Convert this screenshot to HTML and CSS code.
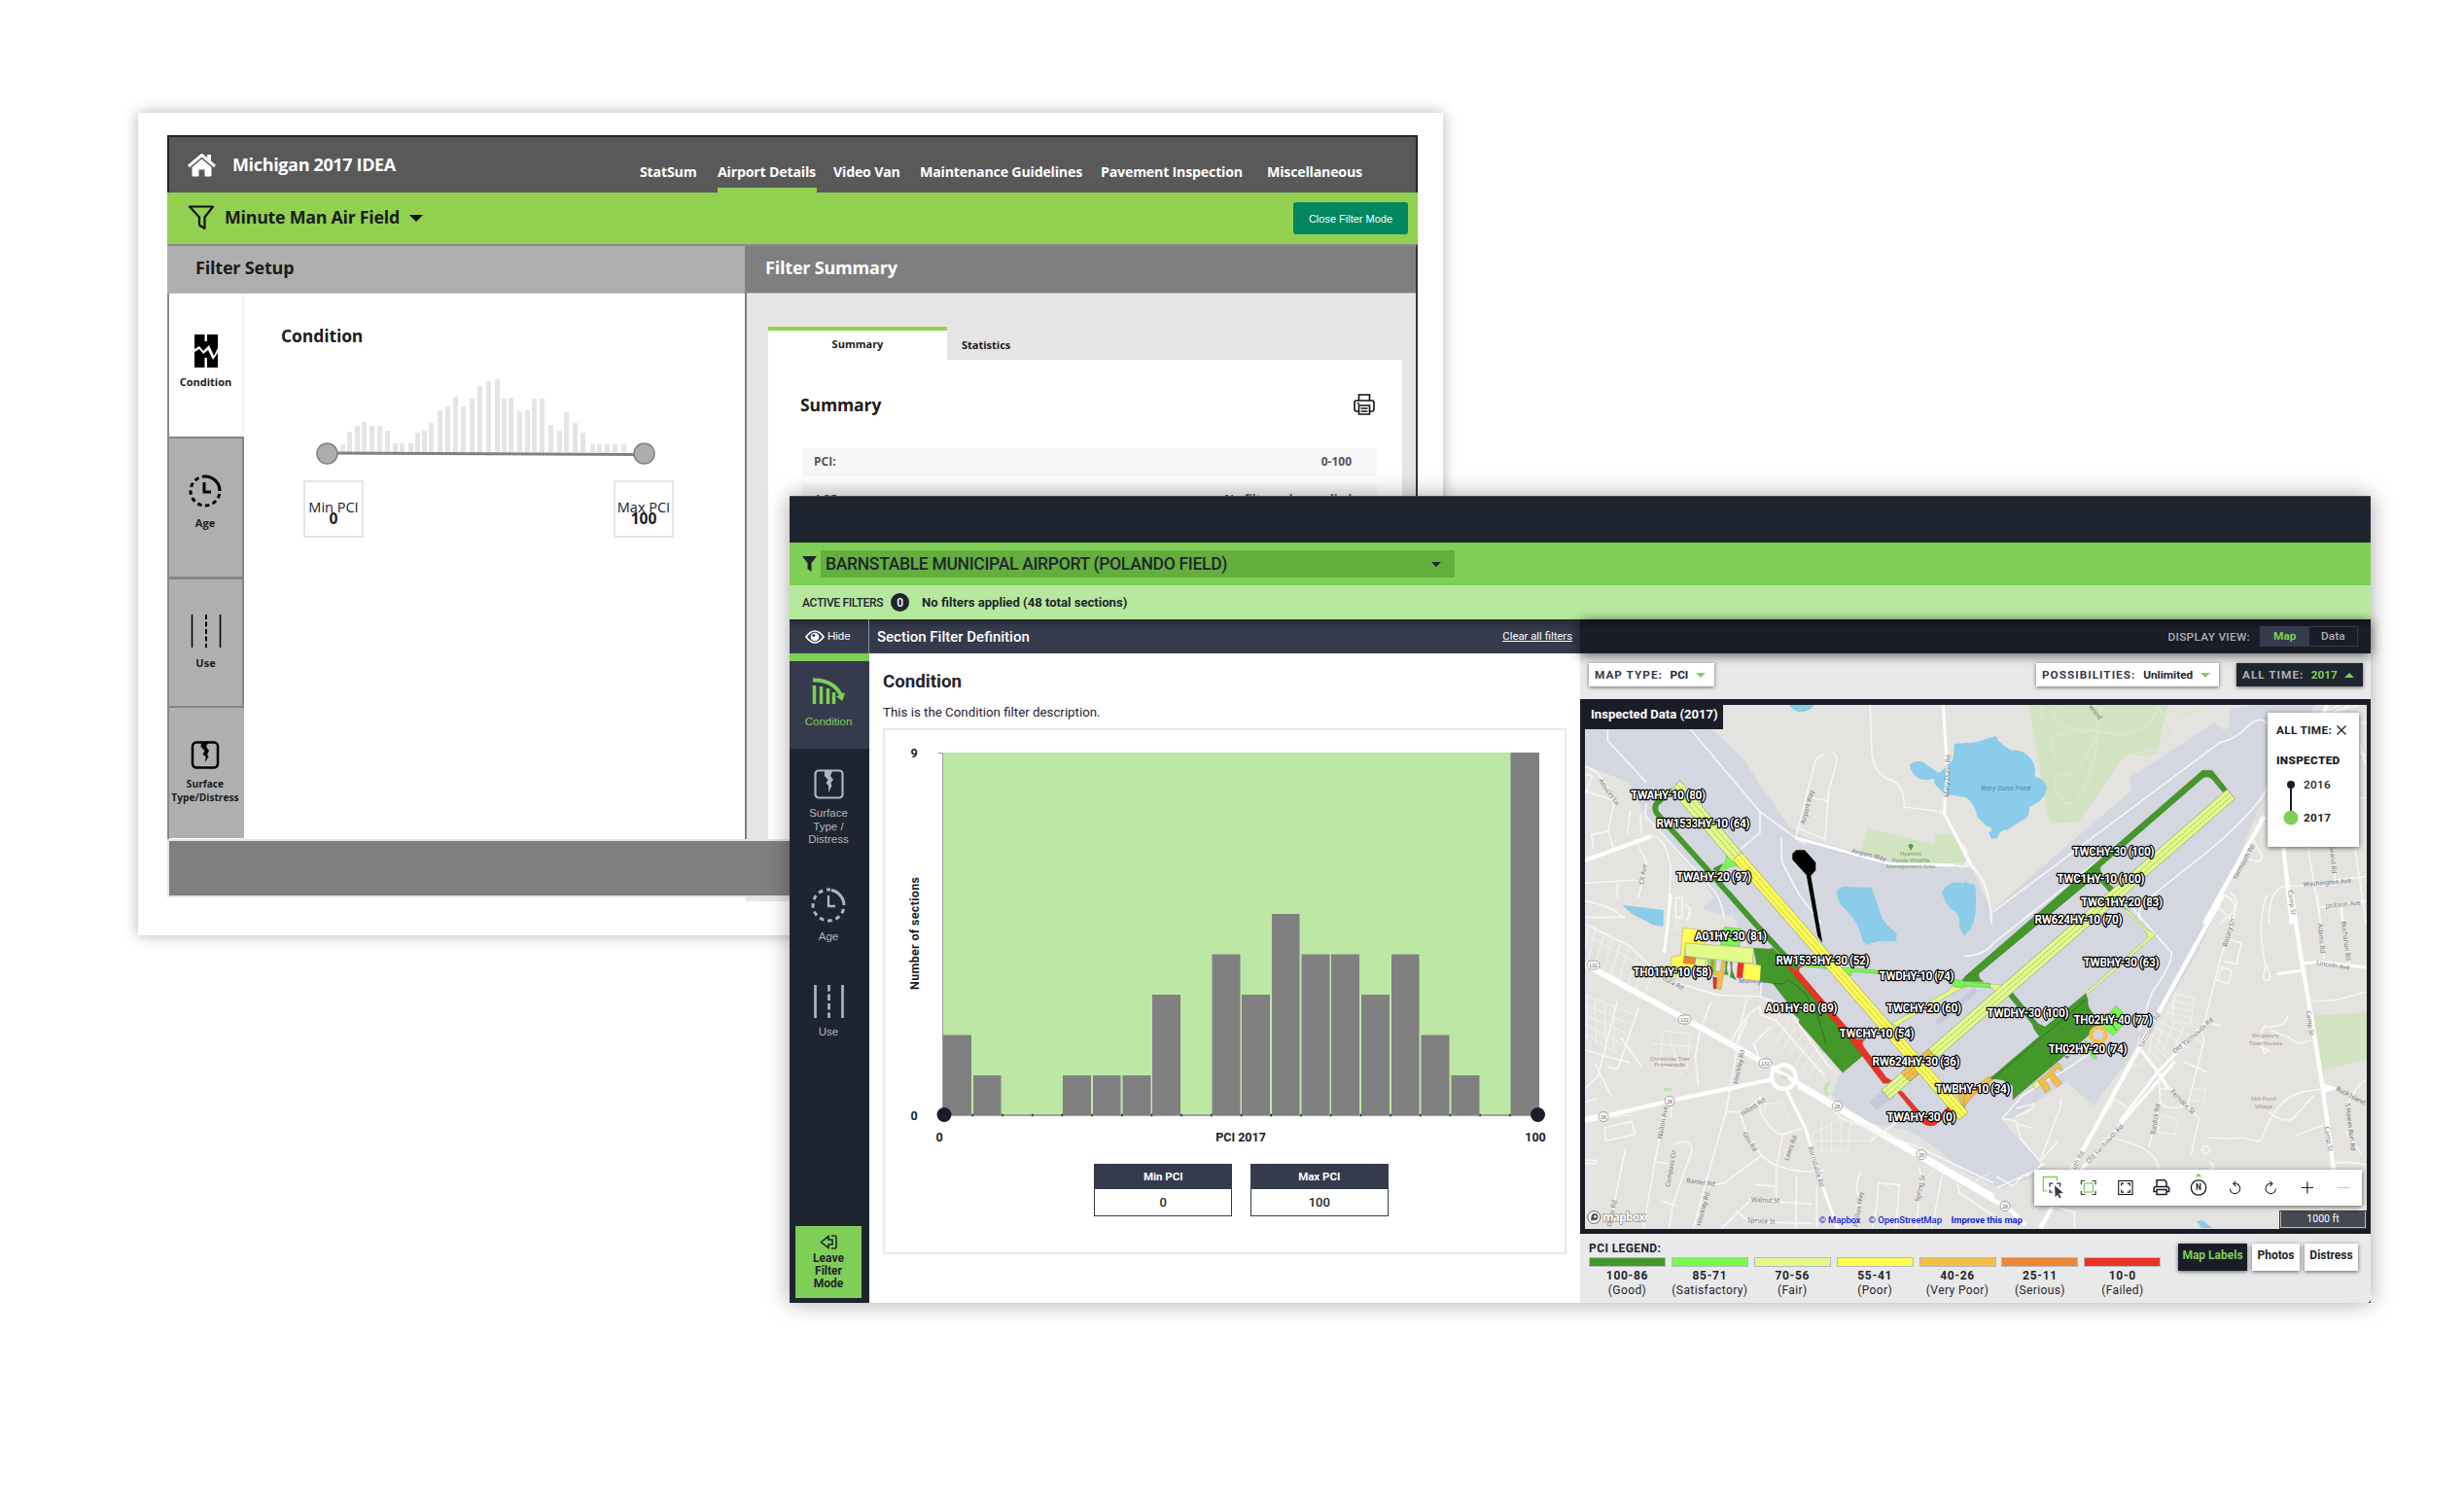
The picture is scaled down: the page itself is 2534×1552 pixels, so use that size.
FILE: index.html
```html
<!DOCTYPE html>
<html lang="en">
<head>
<meta charset="utf-8">
<title>Airport pavement filters</title>
<link rel="stylesheet" href="styles.css">
</head>
<body>
<main class="desktop">

<section class="wireframe">
  <div class="wf-frame">
    <header class="wf-header">
      <svg class="wf-home" viewBox="0 0 29 24"><path d="M1 13 14.500 1.500 28 13" fill="none" stroke="#fff" stroke-width="3"/><path d="M20 1h4v8l-4-4zM4.500 14 14.500 5.500 24.500 14v8.500q0 1-1 1H17.500v-7h-6v7H5.500q-1 0-1-1z" fill="#fff"/></svg>
      <h1 class="wf-title">Michigan 2017 IDEA</h1>
      <nav class="wf-nav"><span>StatSum</span><span class="current">Airport Details</span><span>Video Van</span><span>Maintenance Guidelines</span><span>Pavement Inspection</span><span>Miscellaneous</span></nav>
    </header>
    <div class="wf-airport">
      <svg class="wf-funnel" viewBox="0 0 28 26"><path d="M2 1.500H26L17.500 12.500V24L12 20.500V12.500Z" fill="none" stroke="#111" stroke-width="2.200" stroke-linejoin="round"/></svg>
      <strong>Minute Man Air Field</strong>
      <i class="caret wf-caret"></i>
      <button class="wf-close">Close Filter Mode</button>
    </div>
    <div class="wf-body">
      <section class="wf-setup">
        <h2 class="wf-bar">Filter Setup</h2>
        <div class="wf-setup-row">
          <aside class="wf-side">
            <div class="wf-tab t1"><svg width="24" height="34" viewBox="0 0 24 34"><path d="M0 0H10.500V7H13V0H24V14L20 22 15 11 9 17 5 12 0 15Z"/><path d="M0 18 5 15 9 20 14 16 19 26 24 19V34H13V24H10.500V34H0Z"/></svg><span>Condition</span></div>
            <div class="wf-tab t2"><svg width="34" height="34" viewBox="0 0 34 34"><path d="M17 2A15 15 0 0 1 32 17" fill="none" stroke="#000" stroke-width="3"/><path d="M32 17A15 15 0 1 1 17 2" fill="none" stroke="#000" stroke-width="3" stroke-dasharray="4.500 3.500" stroke-dashoffset="-3"/><path d="M16 8V18H23" fill="none" stroke="#000" stroke-width="3"/></svg><span>Age</span></div>
            <div class="wf-tab t3"><svg width="32" height="34" viewBox="0 0 32 34"><path d="M1.500 0V34M30.500 0V34" stroke="#000" stroke-width="1.500"/><path d="M16 0V34" stroke="#000" stroke-width="2" stroke-dasharray="5 2.500"/></svg><span>Use</span></div>
            <div class="wf-tab t4"><svg width="30" height="29" viewBox="0 0 30 29"><rect x="2" y="1.500" width="26" height="26" rx="4" fill="none" stroke="#000" stroke-width="2.500"/><path d="M11 2H18L16 6 19 10 17 14 18.500 16 15 22 15.500 16 12.500 14 14.500 10 10.500 6Z"/></svg><span>Surface<br>Type/Distress</span></div>
          </aside>
          <div class="wf-main">
            <h3>Condition</h3>
            <svg class="wf-hist" width="400" height="90" viewBox="0 0 400 90">
              <g fill="#e5e5e5"><path d="M35 67h5v8h-5zM42 54h5v21h-5zM50 48h5v27h-5zM57 44h5v31h-5zM65 48h5v27h-5zM73 48h5v27h-5zM81 53h5v22h-5zM89 66h5v9h-5zM96 66h5v9h-5zM105 66h5v9h-5zM112 55h5v23h-5zM119 53h5v22h-5zM126 45h5v30h-5zM135 32h5v43h-5zM143 28h5v47h-5zM151 18h5v57h-5zM159 28h5v47h-5zM168 20h5v55h-5zM176 7h5v68h-5zM185 2h5v77h-5zM194 0h5v75h-5zM201 20h5v55h-5zM208 19h5v56h-5zM217 33h5v42h-5zM225 32h5v43h-5zM232 20h5v55h-5zM240 20h5v55h-5zM249 47h5v28h-5zM258 53h5v22h-5zM265 34h5v41h-5zM274 45h5v30h-5zM282 55h5v20h-5zM292 67h5v8h-5zM299 67h5v8h-5zM307 67h5v8h-5zM315 67h5v8h-5zM324 67h5v8h-5z"/></g>
              <path d="M21.500 76 347.500 77.500" stroke="#808080" stroke-width="3"/>
              <circle cx="21.500" cy="76.500" r="10.500" fill="#adadad" stroke="#808080" stroke-width="1.500"/><circle cx="347.500" cy="76.500" r="10.500" fill="#adadad" stroke="#808080" stroke-width="1.500"/>
            </svg>
            <div class="wf-limits"><div>Min PCI<b>0</b></div><div>Max PCI<b>100</b></div></div>
          </div>
        </div>
      </section>
      <section class="wf-summary">
        <h2 class="wf-bar">Filter Summary</h2>
        <div class="wf-tabs"><span class="on">Summary</span><span>Statistics</span></div>
        <div class="wf-sheet">
          <div class="wf-sheet-head"><h3>Summary</h3>
            <svg width="22" height="22" viewBox="0 0 22 22" fill="none" stroke="#111" stroke-width="1.600"><path d="M5.500 7V1H16.500V7M5 18H3Q1 18 1 16V9Q1 7 3 7H19Q21 7 21 9V16Q21 18 19 18H17M5.500 12H16.500V21H5.500ZM7.500 15H14.500M7.500 18H14.500M4 10H6"/></svg></div>
          <div class="wf-row"><span>PCI:</span><span>0-100</span></div>
          <div class="wf-row"><span>AGE:</span><span>No filter rules applied</span></div>
        </div>
      </section>
    </div>
    <footer class="wf-footer"></footer>
    <div class="wf-tail"></div>
  </div>
</section>

<section class="app">
  <div class="app-top"></div>
  <div class="app-airport">
    <svg width="15" height="16" viewBox="0 0 15 16"><path d="M0 0H15L9.500 7V16L5.500 13V7Z" fill="#1f2530"/></svg>
    <div class="app-select"><span>BARNSTABLE MUNICIPAL AIRPORT (POLANDO FIELD)</span><i class="caret"></i></div>
  </div>
  <div class="app-active"><span>ACTIVE FILTERS</span><b class="count">0</b><strong>No filters applied (48 total sections)</strong></div>
  <div class="app-body">
    <aside class="side">
      <div class="hide"><svg width="20" height="14" viewBox="0 0 20 14"><path d="M1 7Q10-5 19 7Q10 19 1 7Z" fill="none" stroke="#fff" stroke-width="1.700"/><circle cx="10" cy="7" r="4.300" fill="#fff"/><circle cx="8.800" cy="5.500" r="1.500" fill="#353b4c"/></svg>Hide</div>
      <div class="item active"><svg width="34" height="28" viewBox="0 0 34 28" fill="none" stroke="#7fcf56"><path d="M1 2.500C17 2 26 9 31 20" stroke-width="4"/><path d="M34 15 31.500 24 25 19.500Z" fill="#7fcf56" stroke="none"/><path d="M2.500 8V27M9.500 9V27M16.500 11V27M22.500 15V27" stroke-width="3.500"/></svg><span>Condition</span></div>
      <div class="item surface"><svg width="31" height="31" viewBox="0 0 31 31"><rect x="1.500" y="1.500" width="28" height="28" rx="3.500" fill="none" stroke="#aeb4c2" stroke-width="2.200"/><path d="M11 2H19L17 7 20 11 17.500 14 18.500 17 15 24 15 17 12.500 14.500 14.500 11 11 7Z" fill="#aeb4c2"/></svg><span>Surface<br>Type /<br>Distress</span></div>
      <div class="item age"><svg width="36" height="36" viewBox="0 0 36 36" fill="none" stroke="#aeb4c2" stroke-width="3"><path d="M21 2.500A16 16 0 0 1 34 18"/><path d="M34 19A16 16 0 1 1 20 2" stroke-dasharray="4.600 4" stroke-dashoffset="-3"/><path d="M18 8V19H25" stroke-width="2.300"/></svg><span>Age</span></div>
      <div class="item use"><svg width="31" height="34" viewBox="0 0 31 34" fill="none" stroke="#aeb4c2" stroke-width="2.700"><path d="M1.500 0V34M29.500 0V34"/><path d="M15.500 0V34" stroke-dasharray="6.500 3"/></svg><span>Use</span></div>
      <div class="leave"><svg width="18" height="15" viewBox="0 0 18 15" fill="none" stroke="#1f2530" stroke-width="1.600"><path d="M12 1H15.500Q17 1 17 2.500V12.500Q17 14 15.500 14H12M9 5V1.500L1.500 7.500 9 13.500V10H13V5Z"/></svg>Leave<br>Filter<br>Mode</div>
    </aside>
    <section class="def">
      <header><h2>Section Filter Definition</h2><a>Clear all filters</a></header>
      <div class="def-body">
        <h3>Condition</h3>
        <p>This is the Condition filter description.</p>
        <div class="card">
          <svg class="chart" width="698" height="432" viewBox="910 751 698 432">
            <path d="M969.500 774H1583V1147H969.500Z" fill="#bce7a5"/>
            <path d="M965 774.500H969.500V1147" fill="none" stroke="#999" stroke-width="1"/>
            <path d="M969.500 1147H1583" stroke="#888" stroke-width="1.500"/>
            <path d="M969.500 1147H1583" stroke="#1a1e29" stroke-width="2.500" stroke-dasharray="1.500 29.200" stroke-dashoffset="-30"/>
            <g fill="#808080"><path d="M970 1064.500h29V1147h-29zM1001 1106h28.500V1147h-28.500zM1093 1106h29V1147h-29zM1124 1106h28.500V1147h-28.500zM1154.500 1106h29V1147h-29zM1185 1023h29V1147h-29zM1246.500 981.500h29V1147h-29zM1277 1023h29V1147h-29zM1308 940h28.500V1147h-28.500zM1338.500 981.500h29V1147h-29zM1369 981.500h29V1147h-29zM1400 1023h29V1147h-29zM1431 981.500h28.500V1147h-28.500zM1461.500 1064.500h29V1147h-29zM1492.500 1106h29V1147h-29zM1553.500 774h29.500V1147h-29.500z"/></g>
            <g fill="#191d28"><circle cx="971" cy="1146.500" r="7.500"/><circle cx="1581.500" cy="1146.500" r="7.500"/></g>
            <g class="chart-text"><text x="940" y="779">9</text><text x="940" y="1151.500">0</text><text x="966" y="1174">0</text><text x="1276" y="1174">PCI 2017</text><text x="1579" y="1174">100</text><text transform="translate(945 960) rotate(-90)" textLength="116">Number of sections</text></g>
          </svg>
          <div class="limits"><div><b>Min PCI</b><span>0</span></div><div><b>Max PCI</b><span>100</span></div></div>
        </div>
      </div>
    </section>
    <section class="view">
      <header><span>DISPLAY VIEW:</span><div class="seg"><b>Map</b><span>Data</span></div></header>
      <div class="filters">
        <div class="drop"><span>MAP TYPE:</span><b>PCI</b><i class="caret"></i></div>
        <div class="drop poss"><span>POSSIBILITIES:</span><b>Unlimited</b><i class="caret"></i></div>
        <div class="drop dark"><span>ALL TIME:</span><b>2017</b><i class="caret up"></i></div>
      </div>
      <div class="map">
        <svg class="map-art" viewBox="1630 725 804 539" preserveAspectRatio="none">
          <rect x="1630" y="725" width="804" height="539" fill="#e4e3df"/>
          <path fill="#d5d7e0" d="M1630 745H1755L1793 780 1810 807 1840 850 1857 862 1897 873 2027 892 2048 937 2110 883 2192 813 2190 800 2277 743 2287 751 2293 747V730L2317 725H2380L2330 810 2297 897 2260 980 2220 1047 2153 1138 2125 1112 2070 1150H2057L2102 1200 2100 1208 2057 1222 2020 1205 1990 1180 1963 1163 1923 1155 1883 1127 1893 1103 1850 1050 1810 1023 1800 980 1783 943 1750 935 1763 923 1750 905 1693 840 1675 805 1630 787Z"/>
          <path fill="#c6c9dc" d="M1922 1133 1940 1118 1949 1127 1930 1142ZM1990 1050 2030 1015 2034 1020 1994 1055ZM1870 1079 1884 1070 1890 1075 1876 1083Z"/>
          <g transform="translate(2020 610) scale(.33333)">
            <path fill="#d1e3c1" d="M198 340H630L592 500H495L352 707 263 710Z"/>
            <g fill="none" stroke="#dbe5d2" stroke-width="6"><path d="M240 345Q245 400 225 410M300 345Q240 380 330 420L414 425 480 440Q570 430 600 350M414 425Q360 560 310 560T290 620 360 620 414 425M380 430Q280 420 270 460T300 510M400 345 416 425M500 500Q640 480 635 430L600 345M640 360Q700 390 740 345"/></g>
            <path fill="#8accea" d="M40 460 95 443Q115 470 145 485 180 480 205 510 225 535 216 565 250 575 255 600 250 640 200 660 205 690 180 700L135 730Q108 730 103 755L85 758 75 740Q100 725 70 720L40 690Q35 650 5 630L-60 620-90 590Q-100 560-70 550L-35 515-30 465Z"/>
          </g>
          <g transform="translate(1610 610) scale(.33333)">
            <path fill="#8accea" d="M1210 560Q1225 530 1270 500V460L1330 440V760L1310 745 1315 725 1295 710 1280 650 1240 630 1210 615 1230 605ZM690 345H767Q755 367 722 367 700 362 690 345ZM1062 530Q1075 515 1100 520L1148 553 1147 570 1115 577Q1070 575 1062 530ZM838 920Q850 900 880 907L943 908Q960 950 970 985T1022 1050L1020 1075 960 1075 927 1086 915 1070Q905 1010 855 970 835 945 838 920ZM1162 920Q1190 885 1220 893L1263 900 1267 945Q1245 985 1252 1035L1230 1058 1215 1030Q1220 985 1190 975 1165 950 1162 920ZM175 962 302 978V1028L270 1024Q235 1005 205 990Z"/>
            <path fill="#d1e3c1" d="M932 725 1140 775V743H1195L1237 830 1150 840 1000 822 912 795Z"/>
            <path fill="#579e4c" d="M1065 773a9 8 0 0 1 3 15v5h-5v-5a9 8 0 0 1 2-15z"/>
          </g>
          <path fill="#8accea" d="M2020 906 2031 912Q2034 935 2029 950L2020 960ZM2259 1256 2265 1255 2275 1263H2264Z"/>
          <g fill="#d1e3c1"><path d="M2378 1045 2434 1041V1090L2387 1101Z"/><path fill="#bfe0ae" d="M1711 1119h8v3h-8z"/></g>

          <g class="roads">
            <g transform="translate(1610 610) scale(.33333)">
              <path class="w4" d="M385 420 600 675 710 755 742 775M130 420V455L250 585M60 535Q120 550 148 650L132 735 148 790M60 825 265 750Q310 750 325 850L315 1020M940 345 945 500Q955 560 1000 575T1045 660L1145 672 1165 680M710 755 770 520Q780 500 798 500M800 765 812 610 835 530Q840 500 825 492M750 630 810 640M715 725 803 760M1165 345 1178 550 1168 680 1250 835Q1240 850 1200 840L1000 835 710 755M1250 835Q1310 900 1315 1020M60 560 82 565 60 620M85 790 80 745 130 735M148 640 60 610M200 670 190 745M230 680 235 745M215 760 250 830 225 940M220 885 60 895M160 885V940M250 650Q240 690 260 700L460 920Q480 950 490 1000M600 675V740L540 790M665 755 668 830 720 930 790 1020M340 940H360V1000H340ZM370 960 385 975 375 1010M60 950Q130 960 180 1000L60 1000"/>
              <path class="w8" d="M1165 345 1178 550 1168 680 1250 835M710 755 1000 835 1200 840"/>
              <path class="w12" d="M60 825 265 750"/>
            </g>
            <g transform="translate(1610 920) scale(.33333)">
              <path class="w12" d="M85 225 367 385 616 520 680 560 838 653 1098 803 1320 930M60 695 118 685 320 637 640 570"/>
              <path class="w12 wider" d="M60 215 616 520M720 590 1320 940M60 695 118 685"/>
              <path class="w8" d="M680 600 740 720 790 890 840 1030M325 0 305 180"/>
              <path class="w4" d="M60 90 200 160 300 260 470 310 600 315 680 345 740 430 820 540M600 315 605 270M600 370V345Q530 380 525 500L495 670 430 900 395 1030M495 670 540 670Q545 730 605 805L530 860 490 890 440 900M605 805Q650 850 745 855L800 850M540 680 605 625M600 620V670Q640 740 670 740L730 720M670 740 650 850V940M60 820H95V830H60M185 785 140 1000M310 640 275 830 240 1030M335 770Q390 750 390 790L330 960 320 1030M275 825 315 830M295 945 340 960M565 940 610 945 760 955M525 975 570 1010 760 1015M480 1030 570 945M585 895 645 900M713 870 710 1030M775 900V1030M910 855Q890 900 905 930L890 1030M945 1030Q965 960 965 890L1030 895 1020 1030M820 620Q800 640 850 690L1090 780 1320 890M1090 840 1100 880 1080 1030M1165 850 1130 1030M1210 890 1215 920 1320 990M940 760 1040 690M120 720 205 700 215 740 125 760ZM325 640 325 690M235 530 170 440M160 330 100 560 60 600M90 520 140 620M60 640 100 630M60 480 200 520M450 330 415 420 400 500 410 590M560 320 540 400 500 470M225 350 160 540 130 530M600 370 650 390 720 470 800 560M630 410 580 460 600 510M560 390 520 480 590 500"/>
              <path class="w3" d="M60 120 250 230M70 95 60 170M95 100 70 200M120 120 90 220M145 135 115 240M170 145 140 250M195 160 165 265M220 190 190 280M240 215 215 295M265 250 245 310M60 310 210 370M60 340 200 400M60 370 190 430M60 400 170 460M60 430 160 490M65 315V450M90 325 95 460M120 335 125 470M150 350 150 480M660 370 620 440M690 390 650 460M710 410 670 480M730 430 690 500M750 460 710 520M770 480 730 540M790 500 750 560M300 420 385 430 375 540 290 530ZM320 440 360 560M265 460 395 470M340 40H385V75H350V105H340ZM760 740 850 690 880 700 870 790 770 790ZM790 700V790M820 700V790M850 690V790M765 760H940M890 700 950 720 945 765M130 690 200 680M610 620 620 690M610 650 670 640 690 690M980 890 1025 920M1060 860 1120 870 1150 830M1230 900 1310 860"/>
              <circle cx="673" cy="563" r="37" class="w12" fill="none"/>
              <path class="verge" d="M815 578Q790 600 810 620M662 560 684 568"/>
            </g>
            <g transform="translate(2020 610) scale(.33333)">
              <path class="w4" d="M87 985 790 460Q830 455 870 415T935 403M0 780Q20 820 0 845M20 845Q80 880 83 1010M930 610Q890 680 760 790L560 950Q530 980 545 1010M1215 450 1240 530M1215 490 1240 500M1160 345 1110 370M1190 345 1130 370M1215 345 1140 370M1215 635 1240 630M1060 780 1100 1020M1140 785 1145 900 1000 905Q940 900 940 1020M1205 785 1240 1020M1145 885 1240 875M1095 970 1230 950M1165 960 1170 1020M890 760 920 810Q915 830 900 828L860 815M820 925Q850 940 835 980L790 1020M785 970 825 1010M1215 400H1240"/>
              <path class="w12" d="M1120 345 1080 440M925 690 740 1020M985 785 1010 1020"/>
              <path class="rail" d="M1080 345 720 1020M930 650 900 700"/>
            </g>
            <g transform="translate(2020 920) scale(.33333)">
              <path class="w12" d="M800 0 360 800 235 1030M0 885 150 980 190 1020M1010 0 1040 200 1075 400 1105 590 1140 850"/>
              <path class="w8" d="M650 515 360 850M480 700 600 545 740 400M1110 590 1145 600M545 480 600 550 630 600M965 245 1040 235M1040 212 1100 208 1240 225"/>
              <path class="w4" d="M0 190Q60 190 90 150L420-110M500 20 640 180Q640 220 580 300L540 420M400 480 330 530 180 620 118 690 160 700 175 755 240 830Q230 850 100 905M160 660 215 645 215 660 160 685M165 710 210 720M300 630 295 660 235 820M290 760 255 800 240 820M740 400 790 200 830 80Q850 20 800 0M690 650 740 450 730 420M600 600 640 600 725 690 700 805M600 545 605 640 570 780M605 640Q620 670 690 650M745 395 795 405M675 515 750 548M795 225 825 235 815 275 780 265ZM820 140 855 150 840 215 800 205M935 0Q900 80 930 220Q915 270 935 265T930 220M1075 330 1150 325 1240 300M1140 830Q1190 820 1240 835M1105 600 1040 610Q960 630 920 750 920 770 860 750 820 755 750 750M940 670Q970 700 1010 695L1080 620M1020 745 1110 710M1090 0 1110 200M1160 40 1190 225M1090 40 1240 20M1180 655Q1200 600 1240 570M1175 730 1225 800M450 750Q600 780 600 850M760 825 770 845 755 850 740 880 700 910M745 800a12 12 0 1 1 .1 0M250 830 190 870M100 870 150 900 180 870M220 975 310 880M450 660 460 630 500 655M270 960 340 980V1030M1105 960V1030M1240 960 1180 1000M1000 375 985 400 945 410 925 405 915 430 925 490 940 480 910 470M945 420 1000 440 1030 460 1070 450"/>
              <path class="w3" d="M650 305 710 320 700 400 640 390ZM640 325 700 340M635 345 700 360M630 365 700 380M660 305 620 380 580 440 570 480 610 520M600 390 740 460M590 410 700 480M580 430 650 510M570 450 630 510M620 385 590 480M650 390 610 490M680 400 640 500M540 440 520 520 540 530 580 470M620 680 660 695 650 740 600 735 600 690ZM710 600 745 600 740 640 700 635"/>
            </g>
          </g>
          <path fill="#fff" d="M2385 1110 2388 1113 2402 1120 2390 1124ZM1819 1107h5l-3 5z"/>

          <g class="places">
            <text transform="translate(1644 803) rotate(55)">Attucks Ln</text><text transform="translate(1690 910) rotate(-80)">Cit Ave</text><text transform="translate(1856 848) rotate(-75)">Airport Way</text><text transform="translate(1904 877) rotate(14)">Airport Way</text><text transform="translate(2004 820) rotate(-88)">Mary Dunn Rd</text>
            <text transform="translate(2148 727) rotate(52)">wood</text><text transform="translate(2300 905) rotate(-62)">Yarmouth Rd</text><text transform="translate(2369 912) rotate(-5)">Washington Ave</text><text transform="translate(2353 916) rotate(82)">Camp St</text><text transform="translate(2396 870) rotate(85)">Grand Rd</text><text transform="translate(2392 934) rotate(-6)">Jackson Ave</text><text transform="translate(2384 950) rotate(85)">Adams Rd</text><text transform="translate(2408 948) rotate(83)">Buchanan Rd</text><text transform="translate(2382 992) rotate(9)">Lincoln Ave</text><text transform="translate(2372 1040) rotate(82)">Camp St</text><text transform="translate(2391 1159) rotate(82)">Camp St</text><text transform="translate(2402 1121) rotate(28)" textLength="33">Buck Island</text><text transform="translate(2412 1135) rotate(83)">S Hawes Run Rd</text>
            <text transform="translate(2290 974) rotate(-74)">Rosary Ln</text><text transform="translate(2203 1078) rotate(-62)">Yarmouth Rd</text><text transform="translate(2237 1084) rotate(-41)">Old Yarmouth Rd</text><text transform="translate(2148 1197) rotate(-47)">Old Yarmouth Rd</text><text transform="translate(2134 1203) rotate(-62)">uth Rd</text><text transform="translate(2232 1123) rotate(46)">Ferndoc St</text><text transform="translate(2216 1167) rotate(-80)">Baldick Rd</text>
            <text transform="translate(1709 1007) rotate(28)">dura Rd</text><text transform="translate(1787 1115) rotate(-78)">Hinckley Rd</text><text transform="translate(1792 1148) rotate(-33)">Hiltett Rd</text><text transform="translate(1792 1166) rotate(58)">Otis Rd</text><text transform="translate(1709 1172) rotate(-80)">Walton Ave</text><text transform="translate(1717 1221) rotate(-80)">Compass Cir</text><text transform="translate(1734 1216) rotate(8)">Baxter Rd</text><text transform="translate(1839 1194) rotate(-70)">Lewis Rd</text><text transform="translate(1860 1180) rotate(74)">Barnstable Rd</text><text transform="translate(1801 1236) rotate(2)">Walnut St</text><text transform="translate(1797 1257) rotate(3)">Spruce St</text><text transform="translate(1749 1261) rotate(-75)">Hinckley Rd</text><text transform="translate(1657 1262) rotate(-78)">Oliver Rd</text><text transform="translate(1910 1262) rotate(-80)">Phillips Way</text><text transform="translate(1974 1236) rotate(-78)">Spring St</text>
            <g class="poi"><text x="1717" y="1091">Christmas Tree</text><text x="1717" y="1097">Promenade</text><text x="2330" y="1067">Kingsbury</text><text x="2330" y="1075">Townhouses</text><text x="2328" y="1132">Mill Pond</text><text x="2328" y="1140">Village</text></g>
            <g class="poi" fill="#64a05a"><text x="1965" y="880">Hyannis</text><text x="1965" y="887">Ponds Wildlife</text><text x="1965" y="893">Management Area</text></g>
            <text x="2037" y="812.500" fill="#4a7fc4" font-style="italic" textLength="51">Mary Dunn Pond</text><text x="1788" y="1011" fill="#5060c8">Municipal</text>
          </g>
          <g class="shields"><rect x="1632" y="988" width="13" height="9" rx="4.500"/><rect x="1726" y="1044" width="13" height="9" rx="4.500"/><rect x="1809" y="1089" width="13" height="9" rx="4.500"/><circle cx="1649" cy="1148.500" r="5"/><circle cx="1717" cy="1132.500" r="5"/><circle cx="1889.500" cy="1137.500" r="5"/><circle cx="1976" cy="1187.500" r="5"/><circle cx="2062" cy="1240.500" r="5"/>
            <text x="1638.500" y="994.500">132</text><text x="1732.500" y="1050.500">132</text><text x="1815.500" y="1095.500">132</text><text x="1649" y="1150.500">28</text><text x="1717" y="1134.500">28</text><text x="1889.500" y="1139.500">28</text><text x="1976" y="1189.500">28</text><text x="2062" y="1242.500">28</text></g>

          <path d="M1843.300 878 1847.300 874.300H1856L1867.300 887V895L1862.300 900.700 1874.300 970 1869.300 963 1857.700 900 1843.300 884Z"/>
          <g class="sections">
            <g transform="translate(1610 920) scale(.33333)">
              <path fill="#44982a" d="M580 165 630 168 640 165 700 225 920 495 855 550 720 395 722 385 700 365 690 340 640 275 600 268Z"/>
              <path class="joint" d="M640 275 670 275 688 262 740 305 780 380 803 460"/>
              <path fill="#fffd54" d="M362 103 430 110 428 155 372 150 365 190 402 195 395 225 325 222 327 192 355 188Z"/>
              <path fill="#78fa4c" d="M490 100 543 106 538 160 478 155ZM440 200 465 203 462 238 448 236 452 212 440 215Z"/>
              <path fill="#e2fb89" d="M370 150 580 165 577 213 370 190ZM402 197 435 200 432 222 398 220ZM325 225 345 228 338 262 325 260Z"/>
              <path fill="#ee8632" d="M366 190 400 195 398 215 363 212ZM448 204 458 204 455 240 447 240Z"/>
              <path fill="#f4bf45" d="M482 205 493 207 480 293 467 290 472 250 455 248 457 237 478 238Z"/>
              <path fill="#44982a" d="M494 206 500 208Q494 230 502 248L490 246Q496 228 494 206ZM508 208 515 210Q510 230 520 250L527 264 508 254Q513 230 508 208Z"/>
              <path fill="#eb3323" d="M532 210 550 212 545 258 528 256ZM455 254 468 256 465 292 456 290Z"/>
              <path fill="#fffd54" d="M552 212 603 218 600 267 547 262Z"/>
              <path fill="#eb3323" d="M685 215 735 222Q715 225 722 240L900 447 925 447Q910 455 920 470L990 565 1008 575 995 583 980 583 890 465 685 225ZM1020 605 1038 607 1105 683 1150 690 1180 653 1195 665 1140 712Q1120 718 1105 708Z"/>
              <path fill="#78fa4c" d="M735 215 800 222 870 226 970 235 970 245 885 238 880 252 860 235 735 222ZM1190 262 1310 274V286L1245 280 1215 290 1180 270Z"/>
              <path fill="#e2fb89" d="M1005 398 1185 295 1190 284 1225 288 1045 390Q1030 395 1030 410Z"/>
              <path fill="#44982a" d="M1225 262 1320 185V200L1270 245Q1268 262 1290 268L1225 266Z"/>
              <path fill="#f4bf45" d="M1205 615 1260 608 1315 560 1320 570 1235 640 1232 660Z"/>
            </g>
            <g transform="translate(2020 920) scale(.33333)">
              <path fill="#44982a" d="M375 305 382 325Q378 345 400 370L430 395 150 633V590L120 573 80 567 232 437Q215 420 210 400L135 312 150 303 228 398 250 408ZM0 258 310 0 320 8 48 238Q40 252 55 268L0 266ZM310 500 325 498 318 506Z"/>
              <path fill="#78fa4c" d="M0 268 80 276V287L0 282ZM467 342 495 370 488 405 460 436 440 418 425 400ZM375 450 410 505 400 508 370 465ZM490 32 510 55 495 45Z"/>
              <path fill="#e2fb89" d="M80 276 125 280 95 300Q95 290 80 288ZM500 45 562 108 593 122 380 308 375 303 568 132Q568 115 495 52ZM212 585 230 575 235 590 220 602Z"/>
              <path fill="#f4bf45" d="M228 575 260 548 290 518 305 540 298 545 288 535 275 550 302 583 285 595 260 562 250 572 267 600 250 612ZM75 562 85 568 30 615 0 655V620Z"/>
              <circle cx="414" cy="433" r="22" fill="#d5d7e0" stroke="#f4bf45" stroke-width="14"/><circle cx="414" cy="433" r="17" fill="none" stroke="#d5d7e0" stroke-width="5" stroke-dasharray="5 8"/>
              <path class="joint" d="M85 572 375 325M440 380 470 420M455 365 485 400"/>
            </g>
            <g transform="translate(1610 610) scale(.33333)"><path class="taxiway" d="M330 608 285 645Q270 660 282 680L435 850 585 1020 715 1160"/><path fill="#44982a" d="M455 850 485 835 470 865Z"/><path fill="#78fa4c" d="M497 800 520 825 540 842Q505 838 485 860L475 850Q498 835 497 800ZM300 620 325 605 335 612 318 625Z"/></g>
            <g transform="translate(2020 610) scale(.33333)"><path fill="#44982a" d="M0 1185 735 547H765L812 605 798 614 765 575Q750 560 735 572L420 845Q418 870 440 890L465 912 450 925 405 875 50 1170Z"/></g>
            <path class="strip" fill="#e2fb89" d="M1935 1121 2290.700 811.700 2298.300 821.700 1943.300 1130.700Z"/>
            <path class="strip" fill="#f4bf45" d="M1955 1103.500 1983.500 1079 1992 1088 1964 1112Z"/>
            <path class="mark" d="M1938 1124.200 2293.300 815M1940.600 1127.500 2295.800 818.300"/>
            <path class="strip" fill="#e2fb89" d="M1727.700 802.700 1791 876.700 1782 887 1718.300 813.300Z"/>
            <path class="strip" fill="#fffd54" d="M1791 876.700 2024 1144 2015 1151.700 1782 884.500Z"/>
            <path class="mark" d="M1724.500 806.500 2021 1146.500M1721.500 810 2018 1149.300"/>
          </g>
          <g class="tags">
            <text x="1677" y="821.500" textLength="77">TWAHY-10 (80)</text><text x="1703.500" y="850.500" textLength="96">RW1533HY-10 (64)</text><text x="1724" y="906" textLength="77">TWAHY-20 (97)</text><text x="1743" y="967" textLength="74">A01HY-30 (81)</text><text x="1679.500" y="1003.500" textLength="81">TH01HY-10 (58)</text><text x="1826.500" y="991.500" textLength="96">RW1533HY-30 (52)</text><text x="1932.500" y="1008" textLength="77">TWDHY-10 (74)</text><text x="1815.500" y="1040.500" textLength="74">A01HY-80 (89)</text><text x="1940" y="1040.500" textLength="77">TWCHY-20 (60)</text><text x="1891.500" y="1067" textLength="77">TWCHY-10 (54)</text><text x="1925.500" y="1096" textLength="90">RW624HY-30 (36)</text><text x="1990.500" y="1124" textLength="77">TWBHY-10 (34)</text><text x="1940.500" y="1153" textLength="71">TWAHY-30 (0)</text><text x="2131.500" y="879.500" textLength="84">TWCHY-30 (100)</text><text x="2115.500" y="907.500" textLength="90">TWC1HY-10 (100)</text><text x="2140" y="932" textLength="84">TWC1HY-20 (83)</text><text x="2092.500" y="950" textLength="90">RW624HY-10 (70)</text><text x="2142.500" y="994" textLength="78">TWBHY-30 (63)</text><text x="2043.500" y="1046" textLength="84">TWDHY-30 (100)</text><text x="2132.500" y="1052.500" textLength="81">TH02HY-40 (77)</text><text x="2106.500" y="1082.500" textLength="81">TH02HY-20 (74)</text>
          </g>
          <g class="credit"><text x="1870.500" y="1257.500" textLength="43">© Mapbox</text><text x="1921.500" y="1257.500" textLength="75.500">© OpenStreetMap</text><text x="2006.500" y="1257.500" textLength="73.500" font-weight="700">Improve this map</text></g>
          <g class="brand"><circle cx="1639.300" cy="1252" r="6.500"/><path d="M1636 1255.500 1636.500 1251A3.500 3.500 0 1 1 1640 1255Z" fill="#555" stroke="none"/><circle cx="1640.500" cy="1251.300" r="1.300" fill="#fff" stroke="none"/><text x="1648" y="1255.500" textLength="44">mapbox</text></g>
        </svg>
        <div class="map-title">Inspected Data (2017)</div>
        <div class="time">
          <div class="time-head">ALL TIME:<svg width="10" height="10" viewBox="0 0 10 10"><path d="M.5.500 9.500 9.500M9.500.500.500 9.500" stroke="#191d28" stroke-width="1.300"/></svg></div>
          <b>INSPECTED</b>
          <div class="time-line"><svg width="16" height="46" viewBox="0 0 16 46"><path d="M8 4V36" stroke="#191d28" stroke-width="2"/><circle cx="8" cy="4" r="4" fill="#191d28"/><circle cx="8" cy="38" r="7.500" fill="#7fcf56"/></svg><div><span>2016</span><span>2017</span></div></div>
        </div>
        <div class="tools">
          <svg viewBox="217 850 112 110"><g fill="none"><path d="M257 915H245V872H287V885" stroke="#7fcf56" stroke-width="4"/><path d="M265 902V892H275M286 892H297V902M265 912V919H273" stroke="#353b4c" stroke-width="4"/></g><path d="M280 898 306 921 293 923 300 934 294 937 289 926 282 934Z" fill="#353b4c"/></svg>
          <svg viewBox="328 850 112 110" fill="none" stroke-width="3.500"><path d="M362 895V884H373M395 884H406V895M406 915V926H395M373 926H362V915" stroke="#353b4c"/><rect x="371" y="891.500" width="27" height="27" stroke="#7fcf56"/></svg>
          <svg viewBox="440 850 112 110" fill="none" stroke="#191d28" stroke-width="3.500"><rect x="475" y="884" width="43" height="42"/><path d="M484 900V892H491M502 892H510V900M510 911V919H502M491 919H484V911"/></svg>
          <svg viewBox="552 850 112 110" fill="none" stroke="#191d28" stroke-width="4.500"><path d="M594 901V882H618L624 888V901M594 917H585V910Q585 902 592 902H625Q632 902 632 910V917H624M594 911H624V926H594Z"/></svg>
          <svg viewBox="664 850 112 110"><path d="M711 871 721 861 731 871Z" fill="#7fcf56"/><circle cx="721" cy="905" r="23" fill="none" stroke="#191d28" stroke-width="4"/><text x="721" y="914" class="north">N</text></svg>
          <svg viewBox="779 850 112 110" fill="none" stroke="#191d28" stroke-width="3"><path d="M822 908A15.500 15.500 0 1 0 833 893"/><path d="M840 885 832 893 840 901"/></svg>
          <svg viewBox="888 850 112 110" fill="none" stroke="#191d28" stroke-width="3"><path d="M961 908A15.500 15.500 0 1 1 950 893"/><path d="M943 885 951 893 943 901"/></svg>
          <svg viewBox="1002 850 112 110"><path d="M1040 905H1077M1058.500 887V923" stroke="#191d28" stroke-width="3.500"/></svg>
          <svg viewBox="1114 850 112 110"><path d="M1152 905H1190" stroke="#c4c5c9" stroke-width="3.500"/></svg>
        </div>
        <div class="scale">1000 ft</div>
      </div>
      <footer class="legend">
        <div class="legend-left"><h4>PCI LEGEND:</h4>
          <ul><li class="c1"><i></i><b>100-86</b>(Good)</li><li class="c2"><i></i><b>85-71</b>(Satisfactory)</li><li class="c3"><i></i><b>70-56</b>(Fair)</li><li class="c4"><i></i><b>55-41</b>(Poor)</li><li class="c5"><i></i><b>40-26</b>(Very Poor)</li><li class="c6"><i></i><b>25-11</b>(Serious)</li><li class="c7"><i></i><b>10-0</b>(Failed)</li></ul></div>
        <div class="toggles"><span class="on">Map Labels</span><span>Photos</span><span>Distress</span></div>
      </footer>
    </section>
  </div>
</section>
</main>
</body>
</html>
```
FILE: styles.css
```css
*{box-sizing:border-box}
body{margin:0;background:#fff}
h1,h2,h3,h4,p,ul{margin:0;padding:0;font-weight:700}
svg{display:block;flex:none}
.desktop{position:relative;width:2534px;height:1552px;overflow:hidden}
.caret{display:block;width:0;height:0;border:5px solid transparent;border-top-color:#1f2530;border-bottom:0}

/* wireframe window */
.wireframe{position:absolute;left:142px;top:116px;width:1342px;height:846px;padding:23px 26px 0 30px;background:#fff;box-shadow:0 0 14px rgba(0,0,0,.3);font-family:"Open Sans","Noto Sans",sans-serif;color:#1c1c1c}
.wf-frame{display:flex;flex-direction:column}
.wf-header{display:flex;height:59px;background:#595959;border:2px solid #242424;border-bottom:0;color:#fff}
.wf-home{width:29px;height:24px;margin:17px 17px 0 19px}
.wf-title{width:419px;font-size:18px;line-height:26px;margin-top:15px;letter-spacing:-.35px}
.wf-nav{display:grid;grid-template-columns:80px 119px 89px 186px 171px auto;font-size:14.200px;letter-spacing:-.2px;font-weight:700;line-height:20px;padding-top:26px;white-space:nowrap}
.wf-nav .current{width:102px;height:31px;border-bottom:5px solid #91d14f}
.wf-airport{display:flex;align-items:center;height:53px;background:#91d14f;padding:0 10px 0 21px}
.wf-funnel{width:28px;height:26px;margin:-2px 10px 0 0}
.wf-airport strong{font-size:17.800px;letter-spacing:-.25px;line-height:26px;width:190px;margin-top:-3px;white-space:nowrap}
.wf-caret{border-width:7px;border-bottom:0;border-top-color:#111}
.wf-close{margin-left:auto;width:118px;height:33px;padding:0;border:0;border-radius:3px;background:#00875f;color:#fff;font:11px "Liberation Sans",sans-serif}
.wf-body{display:flex;height:612px;border-top:2px solid #8a8a8a;border-right:2px solid #333}
.wf-setup{width:596px;border-right:2px solid #808080}
.wf-bar{height:49px;padding-left:29px;font-size:18px;line-height:44px;background:#afafaf;letter-spacing:-.2px;border-bottom:1px solid #bbb}
.wf-setup-row{display:flex;height:561px;border-left:2px solid #888}
.wf-side{display:flex;flex-direction:column;width:77px;font-size:11px;font-weight:700;line-height:13.500px;text-align:center}
.wf-tab{display:flex;flex-direction:column;align-items:center;background:#afafaf;border-right:2px solid #858585}
.t1{height:147px;padding-top:42px;gap:8px;background:#fff;border-color:#f4f4f4}
.t2{height:147px;padding:37px 1px 0 0;gap:9px;border-top:2px solid #858585;border-bottom:3px solid #858585}
.t3{height:132px;padding:36px 0 0;gap:9px;border-bottom:2px solid #858585}
.t4{height:134px;padding:34px 1px 0 0;gap:9px;font-size:10.200px;border-color:#afafaf}
.wf-main{flex:1;padding:30px 0 0 38px}
.wf-main h3,.wf-sheet h3{font-size:17.500px;letter-spacing:-.1px;line-height:26px}
.wf-hist{margin:32px 0 0 26px}
.wf-limits{display:flex;gap:257px;margin:14px 0 0 23px;font-size:14.500px}
.wf-limits div{display:flex;flex-direction:column;align-items:center;width:62px;height:59px;border:2px solid #e5e5e5;padding-top:19px;line-height:14px;white-space:nowrap}
.wf-limits b{font-size:15.500px;line-height:11px;margin-top:-1px}
.wf-summary{flex:1;background:#e5e5e5}
.wf-summary .wf-bar{padding-left:19px;background:#7f7f7f;color:#fff}
.wf-tabs{display:flex;align-items:flex-end;margin:34px 0 0 22px;font-size:11px;font-weight:700;line-height:22px;text-align:center}
.wf-tabs span{height:34px;padding:8px 0 0 15px}
.wf-tabs .on{width:184px;padding:3px 0 0;background:#fff;border-top:4px solid #91d14f}
.wf-sheet{margin:0 14px 0 22px;height:493px;background:#fff;padding:31px 26px 0 35px}
.wf-sheet-head{display:flex;align-items:center;height:30px;margin:0 2px 30px -2px;justify-content:space-between}
.wf-sheet h3{line-height:30px}
.wf-row{display:flex;justify-content:space-between;height:29px;margin-bottom:8px;padding:0 26px 0 12px;background:#f7f7f7;color:#555;font-size:12px;font-weight:700;line-height:28px}
.wf-row+.wf-row{line-height:31px}
.wf-footer{height:60px;background:#7f7f7f;border:2px solid #e3e3e3}
.wf-tail{align-self:flex-end;width:691px;height:4px;background:#e7e7e7}

/* application window */
.app{position:absolute;left:812px;top:510px;width:1626px;height:830px;background:#fff;box-shadow:0 0 22px rgba(0,0,0,.35);font-family:Roboto,sans-serif;color:#1f2530}
.app-top{height:48px;background:#1f2530;border-top:1px solid #444}
.app-airport{display:flex;align-items:center;height:44px;padding-left:13px;gap:4px;background:#7fcf56}
.app-select{display:flex;align-items:center;justify-content:space-between;width:652px;height:28px;padding:0 14px 0 5px;background:#64ae3d;font-size:17.500px;font-weight:500;letter-spacing:-.31px}
.app-active{display:flex;align-items:center;height:35px;padding-left:13px;background:#b6e99d;font-size:12px;font-weight:500}
.app-active>span{letter-spacing:-.33px}
.count{display:flex;align-items:center;justify-content:center;width:19px;height:19px;margin:0 13px 0 8px;border-radius:50%;background:#1f2530;color:#fff;font-weight:500}
.app-active strong{font-size:13.100px;font-weight:700}
.app-body{display:grid;grid-template-columns:82px 731px 813px;height:703px;background:linear-gradient(90deg,transparent 90%,#191d28 90%)}
.side{display:flex;flex-direction:column;background:#1f2530;font:11.500px/13.500px "Liberation Sans",sans-serif;color:#aeb4c2;text-align:center}
.hide{display:flex;align-items:center;gap:3px;height:35px;padding-left:16px;background:linear-gradient(#252a37,#353b4c 10px);border-right:1px solid #8b8f9a;color:#fff}
.item{display:flex;flex-direction:column;align-items:center;padding-right:2px}
.active{height:98px;padding-top:17px;gap:11px;border-top:8px solid #7fcf56;background:#353b4c;color:#7fcf56}
.surface{padding-top:21px;gap:8px}
.age{padding-top:42px;gap:8px}
.use{padding-top:43px;gap:8px}
.leave{display:flex;flex-direction:column;align-items:center;width:68px;height:74px;margin:auto 0 5px 6px;padding-top:9px;background:#7fcf56;color:#1f2530;font:700 12px/13px Roboto,sans-serif}
.leave svg{margin-bottom:3px}
.def header,.view header{display:flex;align-items:center;height:35px;background:linear-gradient(#252a37,#353b4c 10px);color:#fff;justify-content:space-between;padding:0 8px 0 8px}
.def h2{font-size:15px;font-weight:500}
.def a{font:11.300px Roboto;text-decoration:underline}
.def-body{padding:22px 14px 0}
.def h3{font-size:18.700px;line-height:28px;font-weight:700;margin-top:-7px}
.def p{font-size:13.300px;line-height:16px;font-weight:400;margin:8px 0;padding-top:2px}
.card{height:541px;border:2px solid #e9e9e9}
.chart-text{font:700 12.500px Roboto,sans-serif;text-anchor:middle;fill:#191d28}
.limits{display:flex;justify-content:center;gap:18.500px;margin-top:14px;padding-left:34px}
.limits div{width:142px;height:54px;border:1.500px solid #353b4c;text-align:center}
.limits b,.limits span{display:block;height:25px;background:#353b4c;color:#fff;font-size:11.500px;line-height:24px}
.limits span{background:#fff;color:#1f2530;font-size:13px;line-height:28px;font-weight:500}
.view{display:flex;flex-direction:column;background:#e9e9ea;border-bottom-right-radius:4px}
.view header{position:relative;background:linear-gradient(#10131b,#191d28 10px);box-shadow:0 2px 12px rgba(0,0,0,.6);justify-content:flex-end;gap:10px;padding:0 13px 0 0;color:#aeb0b6;font-size:11.800px;font-weight:500;letter-spacing:.3px}
.seg{display:flex;width:101px;height:21px;border:1px solid #353b4c;line-height:19px;text-align:center;letter-spacing:.1px}
.seg b,.seg span{flex:1}
.seg b{background:#353b4c;color:#7fcf56}
.filters{display:flex;align-items:flex-start;height:47px;padding:10px 8px 0 9px}
.drop{display:flex;align-items:center;justify-content:space-between;width:129px;height:24px;padding:0 9px 0 6px;background:#fff;box-shadow:0 1px 4px rgba(0,0,0,.55);font-size:11.800px;position:relative}
.drop span{font-weight:700;letter-spacing:1px;color:#353b4c}
.drop .caret{border-width:5px;border-bottom:0;border-top-color:#7fcf56}
.poss{width:188px;margin-left:auto;margin-right:18px}
.dark{width:130px;background:#1f2530;color:#7fcf56}
.dark span{color:#aeb0b6}
.drop .up{border:5px solid transparent;border-top:0;border-bottom-color:#7fcf56}
.map{position:relative;height:550px;padding:6px 4px 5px 5px;background:#191d28}
.map-art{width:804px;height:539px}
.map-title{position:absolute;left:5px;top:6px;width:142px;height:25px;padding-left:6px;background:#191d28;color:#fff;font-size:13.100px;font-weight:700;line-height:20px}
.roads path,.roads circle{fill:none}
.w3{stroke:#f2f2f1;stroke-width:3}
.w4{stroke:#f6f6f7;stroke-width:5}
.w8{stroke:#fff;stroke-width:9}
.w12{stroke:#fff;stroke-width:13}
.wider{stroke-width:18}
.verge{stroke:#c3e3b3;stroke-width:10}
.rail{stroke:#d6d5d0;stroke-width:3}
.sections g path{stroke:#555;stroke-opacity:.5;stroke-width:1.500}
.sections g .joint{fill:none;stroke:#245f15;stroke-opacity:1;stroke-width:2}
.sections g .taxiway{fill:none;stroke:#44982a;stroke-opacity:1;stroke-width:17}
.strip{stroke:#777;stroke-width:.5}
.mark{fill:none;stroke:#777;stroke-width:.8;stroke-dasharray:1 1}
.places{font:6.500px "Noto Sans",sans-serif;fill:#77777a}
.poi{text-anchor:middle;font-size:5.800px}
.poi:not([fill]){fill:#a58f84}
.shields{fill:#fff;stroke:#888;stroke-width:.8}
.shields text{font:5px sans-serif;fill:#555;stroke:none;text-anchor:middle}
.tags{font:700 12px Roboto,sans-serif;fill:#fff;stroke:#000;stroke-width:2.400;paint-order:stroke;stroke-linejoin:round}
.credit{font:500 9.500px Roboto,sans-serif;fill:#1524dd}
.brand{fill:#fff;stroke:#666;stroke-width:1}
.brand text{font:700 12px "Noto Sans",sans-serif;paint-order:stroke}
.time{position:absolute;left:707px;top:14px;width:94px;height:138px;padding:9px 9px 0;background:#fff;box-shadow:0 1px 5px rgba(0,0,0,.6);font-size:11.800px;font-weight:700;line-height:18px;letter-spacing:.3px;color:#191d28}
.time-head{display:flex;align-items:center;justify-content:space-between;padding-right:4px;margin-bottom:13px;white-space:nowrap}
.time b{display:block}
.time-line{display:flex;gap:5px;margin:10px 0 0 7px;padding-top:2px}
.time-line span{display:block;line-height:34px;position:relative;top:-13px;font-weight:500}
.time-line span+span{font-weight:700}
.tools{position:absolute;left:467px;top:484px;display:flex;width:337px;height:37px;background:#fff;box-shadow:0 1px 5px rgba(0,0,0,.6)}
.tools svg{width:37.400px;height:37px}
.north{font:700 25px Roboto,sans-serif;text-anchor:middle;fill:#191d28}
.scale{position:absolute;left:720px;top:527px;width:88px;height:17px;background:#454952;border:1px solid #bbb;border-top:0;outline:1px solid #333;color:#fff;font-size:10.500px;line-height:16px;text-align:center}
.legend{flex:1;display:flex;justify-content:space-between;padding:8px 13px 0 9px}
.legend h4{font-size:12px;line-height:14px;letter-spacing:.4px;padding-bottom:2px}
.legend ul{display:flex;gap:5.900px;list-style:none;font-weight:400;font-size:12px;line-height:15px;letter-spacing:.4px;text-align:center}
.legend li{width:79px;white-space:nowrap}
.legend i{display:block;height:9.500px;border:1px solid #b5b7c4;margin-bottom:2px}
.legend b{display:block;letter-spacing:.7px}
.c1 i{background:#44982a}.c2 i{background:#78fa4c}.c3 i{background:#e2fb89}.c4 i{background:#fffd54}.c5 i{background:#f4bf45}.c6 i{background:#ee8632}.c7 i{background:#eb3323}
.toggles{display:flex;gap:5px;padding-top:1.500px;font-size:12px;font-weight:700;line-height:25px;text-align:center}
.toggles span{width:49px;height:28px;background:#fff;box-shadow:0 1px 4px rgba(0,0,0,.6)}
.toggles .on{width:71px;background:#191d28;color:#7fcf56}
.toggles span:last-child{width:55px}
```
